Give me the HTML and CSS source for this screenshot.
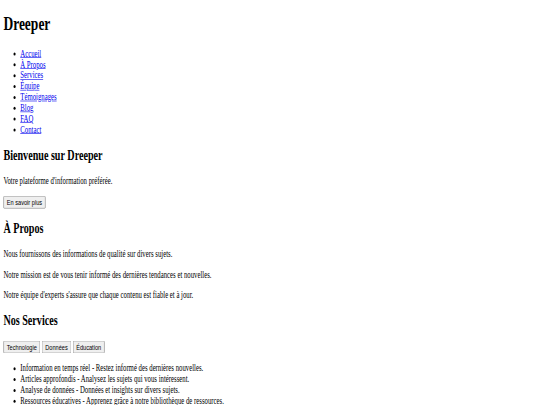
FILE: index.html
```html
<!DOCTYPE html>
<html lang="fr">
<head>
<meta charset="utf-8">
<title>Dreeper</title>
<link rel="stylesheet" href="styles.css">
</head>
<body>
<div class="page">
  <header>
    <h1>Dreeper</h1>
    <nav>
      <ul>
        <li><a href="#accueil">Accueil</a></li>
        <li><a href="#apropos">À Propos</a></li>
        <li><a href="#services">Services</a></li>
        <li><a href="#equipe">Équipe</a></li>
        <li><a href="#temoignages">Témoignages</a></li>
        <li><a href="#blog">Blog</a></li>
        <li><a href="#faq">FAQ</a></li>
        <li><a href="#contact">Contact</a></li>
      </ul>
    </nav>
  </header>
  <section id="accueil">
    <h2>Bienvenue sur Dreeper</h2>
    <p>Votre plateforme d'information préférée.</p>
    <button class="btn">En savoir plus</button>
  </section>
  <section id="apropos">
    <h2>À Propos</h2>
    <p>Nous fournissons des informations de qualité sur divers sujets.</p>
    <p>Notre mission est de vous tenir informé des dernières tendances et nouvelles.</p>
    <p>Notre équipe d'experts s'assure que chaque contenu est fiable et à jour.</p>
  </section>
  <section id="services">
    <h2>Nos Services</h2>
    <div class="tabs">
      <button class="btn">Technologie</button>
      <button class="btn">Données</button>
      <button class="btn">Éducation</button>
    </div>
    <ul>
      <li>Information en temps réel - Restez informé des dernières nouvelles.</li>
      <li>Articles approfondis - Analysez les sujets qui vous intéressent.</li>
      <li>Analyse de données - Données et insights sur divers sujets.</li>
      <li>Ressources éducatives - Apprenez grâce à notre bibliothèque de ressources.</li>
    </ul>
  </section>
</div>
</body>
</html>
```
FILE: styles.css
```css
html, body {
  margin: 0;
  padding: 0;
  background: #ffffff;
}
body {
  width: 540px;
  height: 405px;
  overflow: hidden;
}
.page {
  width: 1264px;
  padding: 8px;
  font-family: "Liberation Serif", "Times New Roman", serif;
  font-size: 16px;
  color: #000;
  transform: scale(0.422, 0.603);
  transform-origin: 0 0;
}
.page > header > h1 {
  margin-top: 13.44px;
}
h1 { font-size: 32px; margin: 21.44px 0; }
h2 { font-size: 24px; margin: 19.92px 0; }
p { margin: 16px 0; }
ul { margin: 16px 0; padding-left: 40px; }
a { color: #0000ee; }
.btn {
  font-family: "Liberation Sans", Arial, sans-serif;
  font-size: 13.333px;
}
```
